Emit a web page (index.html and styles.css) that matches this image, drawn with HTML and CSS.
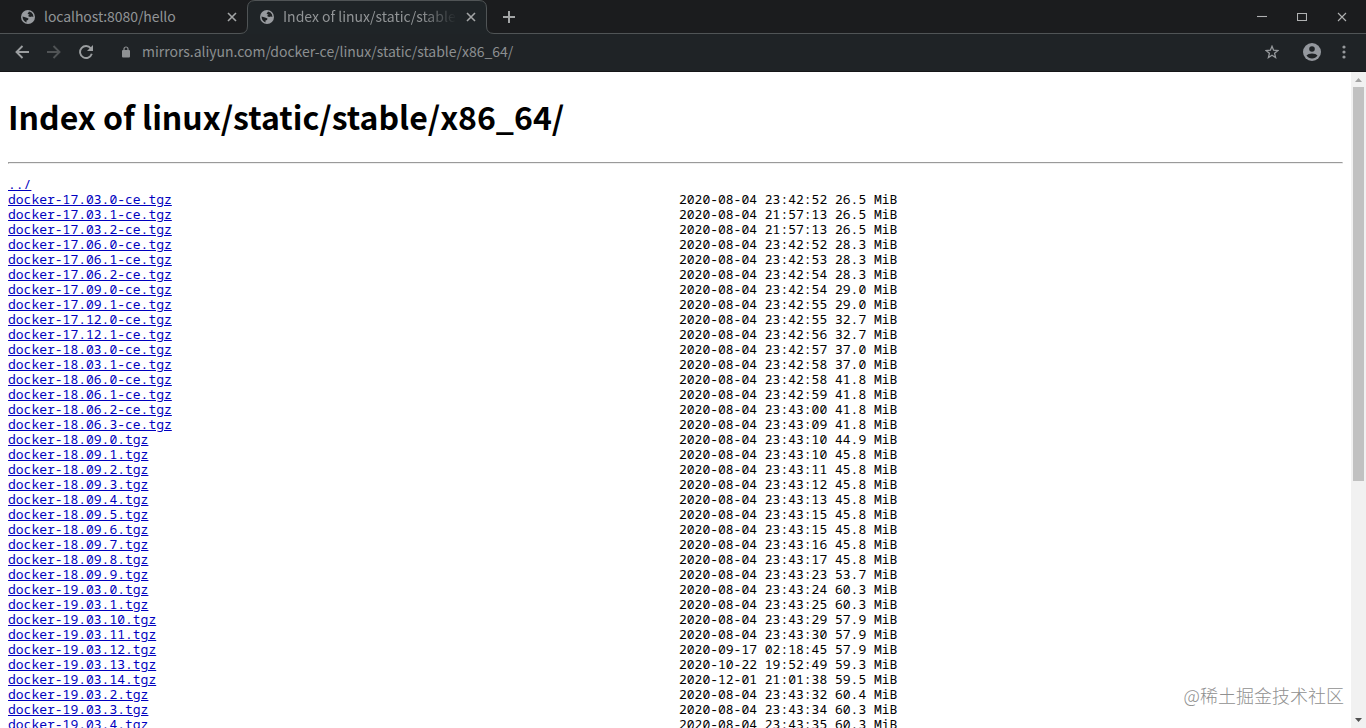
FILE: index.html
```html
<!DOCTYPE html>
<html lang="en">
<head>
    <meta charset="UTF-8">
    <meta name="viewport" content="width=device-width, initial-scale=1.0">
    <title>Index of linux/static/stable/x86_64/</title>
    <link rel="stylesheet" href="styles.css">
</head>
<body>
    <div class="tabs">
        <svg class="tab-outline" width="1366" height="34" viewBox="0 0 1366 34">
            <path class="tab-fill" d="M240 34 Q247.500 33 247.500 26 V8 Q247.500 .5 255 .5 H479 Q486.500 .5 486.500 8 V26 Q486.500 33.500 494 33.500 V34 Z"/>
            <path class="tab-line" d="M0 33.500 H240 Q247.500 33.500 247.500 26 V8 Q247.500 .5 255 .5 H479 Q486.500 .5 486.500 8 V26 Q486.500 33.500 494 33.500 H1366"/>
        </svg>
        <div class="tab">
            <svg class="globe" width="14" height="14" viewBox="0 0 14 14"><circle cx="7" cy="7" r="7"/><path d="M1.500 6.500 L5 7.500 L7.500 8.500 L7 10 L5.500 10.500 L5.500 12.400 Q1.800 11 1.500 6.500Z M8 1.500 Q11 2 12 4.500 L12.400 7 L11 6.500 L9 7 L7 6 L8.500 4.500 L6.500 4 Z"/></svg>
            <span class="tab-title narrow">localhost:8080/hello</span>
            <svg class="close" width="10" height="10" viewBox="0 0 10 10"><path d="M1 1 L9 9 M9 1 L1 9"/></svg>
        </div>
        <div class="tab">
            <svg class="globe" width="14" height="14" viewBox="0 0 14 14"><circle cx="7" cy="7" r="7"/><path d="M1.500 6.500 L5 7.500 L7.500 8.500 L7 10 L5.500 10.500 L5.500 12.400 Q1.800 11 1.500 6.500Z M8 1.500 Q11 2 12 4.500 L12.400 7 L11 6.500 L9 7 L7 6 L8.500 4.500 L6.500 4 Z"/></svg>
            <span class="tab-title faded">Index of linux/static/stable</span>
            <svg class="close" width="10" height="10" viewBox="0 0 10 10"><path d="M1 1 L9 9 M9 1 L1 9"/></svg>
        </div>
        <svg class="new-tab" width="12" height="12" viewBox="0 0 12 12"><path d="M6 0 V12 M0 6 H12"/></svg>
        <div class="window-buttons">
            <svg width="10" height="12" viewBox="0 0 10 12"><path d="M0 5.500 H10"/></svg>
            <svg width="10" height="10" viewBox="0 0 10 10"><path d="M.5 1.500 H9.500 V8.500 H.5 Z"/></svg>
            <svg width="10" height="10" viewBox="0 0 10 10"><path d="M1 1 L9 9 M9 1 L1 9"/></svg>
        </div>
    </div>

    <div class="toolbar">
        <svg class="nav" width="14" height="14" viewBox="0 0 14 14"><path d="M14 7 H1.500 M7.500 1 L1.500 7 L7.500 13"/></svg>
        <svg class="nav disabled" width="14" height="14" viewBox="0 0 14 14"><path d="M0 7 H12.500 M6.500 1 L12.500 7 L6.500 13"/></svg>
        <svg class="nav" width="14" height="14" viewBox="0 0 14 14"><path d="M11.800 3.300 A6 6 0 1 0 12.800 8.800"/><path class="solid" d="M14 0 V6 H8 Z"/></svg>
        <svg class="lock" width="8" height="12" viewBox="0 0 8 12"><rect x="0" y="4" width="8" height="7.500" rx="1"/><path d="M2 4.500 V3 A2 2 0 0 1 6 3 V4.500"/></svg>
        <span class="address">mirrors.aliyun.com/docker-ce/linux/static/stable/x86_64/</span>
        <svg class="star" width="14" height="14" viewBox="0 0 14 14"><path d="M7 1.300 L8.600 5.200 L12.900 5.600 L9.600 8.300 L10.600 12.500 L7 10.200 L3.400 12.500 L4.400 8.300 L1.100 5.600 L5.400 5.200 Z"/></svg>
        <svg class="avatar" width="18" height="18" viewBox="0 0 18 18"><circle cx="9" cy="9" r="9"/><circle class="hole" cx="9" cy="6" r="2.800"/><path class="hole" d="M3.500 12.500 Q5 10.500 9 10.500 Q13 10.500 14.500 12.500 Q12.500 15.500 9 15.500 Q5.500 15.500 3.500 12.500Z"/></svg>
        <svg class="more" width="4" height="14" viewBox="0 0 4 14"><circle cx="2" cy="2" r="1.600"/><circle cx="2" cy="7" r="1.600"/><circle cx="2" cy="12" r="1.600"/></svg>
    </div>

    <div class="viewport">
        <div class="page">
            <h1>Index of linux/static/stable/x86_64/</h1>
            <hr>
            <ul class="listing">
                <li><a href="#">../</a></li>
                <li><a href="#">docker-17.03.0-ce.tgz</a><span>2020-08-04 23:42:52 26.5 MiB</span></li>
                <li><a href="#">docker-17.03.1-ce.tgz</a><span>2020-08-04 21:57:13 26.5 MiB</span></li>
                <li><a href="#">docker-17.03.2-ce.tgz</a><span>2020-08-04 21:57:13 26.5 MiB</span></li>
                <li><a href="#">docker-17.06.0-ce.tgz</a><span>2020-08-04 23:42:52 28.3 MiB</span></li>
                <li><a href="#">docker-17.06.1-ce.tgz</a><span>2020-08-04 23:42:53 28.3 MiB</span></li>
                <li><a href="#">docker-17.06.2-ce.tgz</a><span>2020-08-04 23:42:54 28.3 MiB</span></li>
                <li><a href="#">docker-17.09.0-ce.tgz</a><span>2020-08-04 23:42:54 29.0 MiB</span></li>
                <li><a href="#">docker-17.09.1-ce.tgz</a><span>2020-08-04 23:42:55 29.0 MiB</span></li>
                <li><a href="#">docker-17.12.0-ce.tgz</a><span>2020-08-04 23:42:55 32.7 MiB</span></li>
                <li><a href="#">docker-17.12.1-ce.tgz</a><span>2020-08-04 23:42:56 32.7 MiB</span></li>
                <li><a href="#">docker-18.03.0-ce.tgz</a><span>2020-08-04 23:42:57 37.0 MiB</span></li>
                <li><a href="#">docker-18.03.1-ce.tgz</a><span>2020-08-04 23:42:58 37.0 MiB</span></li>
                <li><a href="#">docker-18.06.0-ce.tgz</a><span>2020-08-04 23:42:58 41.8 MiB</span></li>
                <li><a href="#">docker-18.06.1-ce.tgz</a><span>2020-08-04 23:42:59 41.8 MiB</span></li>
                <li><a href="#">docker-18.06.2-ce.tgz</a><span>2020-08-04 23:43:00 41.8 MiB</span></li>
                <li><a href="#">docker-18.06.3-ce.tgz</a><span>2020-08-04 23:43:09 41.8 MiB</span></li>
                <li><a href="#">docker-18.09.0.tgz</a><span>2020-08-04 23:43:10 44.9 MiB</span></li>
                <li><a href="#">docker-18.09.1.tgz</a><span>2020-08-04 23:43:10 45.8 MiB</span></li>
                <li><a href="#">docker-18.09.2.tgz</a><span>2020-08-04 23:43:11 45.8 MiB</span></li>
                <li><a href="#">docker-18.09.3.tgz</a><span>2020-08-04 23:43:12 45.8 MiB</span></li>
                <li><a href="#">docker-18.09.4.tgz</a><span>2020-08-04 23:43:13 45.8 MiB</span></li>
                <li><a href="#">docker-18.09.5.tgz</a><span>2020-08-04 23:43:15 45.8 MiB</span></li>
                <li><a href="#">docker-18.09.6.tgz</a><span>2020-08-04 23:43:15 45.8 MiB</span></li>
                <li><a href="#">docker-18.09.7.tgz</a><span>2020-08-04 23:43:16 45.8 MiB</span></li>
                <li><a href="#">docker-18.09.8.tgz</a><span>2020-08-04 23:43:17 45.8 MiB</span></li>
                <li><a href="#">docker-18.09.9.tgz</a><span>2020-08-04 23:43:23 53.7 MiB</span></li>
                <li><a href="#">docker-19.03.0.tgz</a><span>2020-08-04 23:43:24 60.3 MiB</span></li>
                <li><a href="#">docker-19.03.1.tgz</a><span>2020-08-04 23:43:25 60.3 MiB</span></li>
                <li><a href="#">docker-19.03.10.tgz</a><span>2020-08-04 23:43:29 57.9 MiB</span></li>
                <li><a href="#">docker-19.03.11.tgz</a><span>2020-08-04 23:43:30 57.9 MiB</span></li>
                <li><a href="#">docker-19.03.12.tgz</a><span>2020-09-17 02:18:45 57.9 MiB</span></li>
                <li><a href="#">docker-19.03.13.tgz</a><span>2020-10-22 19:52:49 59.3 MiB</span></li>
                <li><a href="#">docker-19.03.14.tgz</a><span>2020-12-01 21:01:38 59.5 MiB</span></li>
                <li><a href="#">docker-19.03.2.tgz</a><span>2020-08-04 23:43:32 60.4 MiB</span></li>
                <li><a href="#">docker-19.03.3.tgz</a><span>2020-08-04 23:43:34 60.3 MiB</span></li>
                <li><a href="#">docker-19.03.4.tgz</a><span>2020-08-04 23:43:35 60.3 MiB</span></li>
            </ul>
        </div>
        <div class="scrollbar">
            <svg width="15" height="15" viewBox="0 0 15 15"><path class="arrow-up" d="M4 10 L7.500 6 L11 10 Z"/></svg>
            <div class="thumb"></div>
            <svg class="down" width="15" height="15" viewBox="0 0 15 15"><path class="arrow-down" d="M4 5 L7.500 9 L11 5 Z"/></svg>
        </div>
        <div class="watermark">@稀土掘金技术社区</div>
    </div>
</body>
</html>
```
FILE: styles.css
```css
body {
    margin: 0;
    height: 728px;
    display: flex;
    flex-direction: column;
    overflow: hidden;
    background: #fff;
    font-family: "Noto Sans CJK SC", sans-serif;
}
svg {
    display: block;
    flex: none;
    fill: none;
}

/* tab strip */
.tabs {
    position: relative;
    display: flex;
    align-items: center;
    height: 34px;
    flex: none;
    background: #1b1c1e;
    color: #919496;
    font-size: 14px;
}
.tab-outline {
    position: absolute;
    left: 0;
    top: 0;
}
.tab-fill {
    fill: #1f2427;
}
.tab-line {
    stroke: #505456;
}
.tab {
    position: relative;
    box-sizing: border-box;
    display: flex;
    align-items: center;
    width: 239px;
    height: 34px;
    padding: 0 2px 0 13px;
}
.tab:nth-of-type(1) {
    margin-left: 8px;
}
.globe circle {
    fill: #989b9f;
}
.globe path {
    fill: #1d2022;
}
.tab-title {
    width: 174px;
    height: 34px;
    margin: 0 9px;
    line-height: 32px;
    white-space: nowrap;
    overflow: hidden;
}
.narrow {
    letter-spacing: -0.08px;
}
.faded {
    -webkit-mask-image: linear-gradient(to right, #000 138px, transparent 174px);
    mask-image: linear-gradient(to right, #000 138px, transparent 174px);
}
.close path {
    stroke: #a3a5a6;
    stroke-width: 1.6;
}
.new-tab {
    position: relative;
    margin-left: 17px;
}
.new-tab path {
    stroke: #a3a5a6;
    stroke-width: 2;
}
.window-buttons {
    position: relative;
    display: flex;
    align-items: center;
    gap: 30px;
    margin-left: auto;
    margin-right: 19px;
}
.window-buttons path {
    stroke: #b0b1b2;
    stroke-width: 1.1;
}

/* toolbar */
.toolbar {
    box-sizing: border-box;
    display: flex;
    align-items: center;
    height: 38px;
    flex: none;
    padding: 0 20px 2px 15px;
    background: #1f2326;
    border-bottom: 1px solid #151618;
    color: #8c8f91;
    font-size: 14px;
}
.nav {
    margin-right: 18px;
}
.nav path {
    stroke: #9b9ea0;
    stroke-width: 1.9;
}
.disabled path {
    stroke: #505355;
}
.nav .solid {
    fill: #9b9ea0;
    stroke: none;
}
.lock {
    margin-left: 11px;
}
.lock rect {
    fill: #8f9294;
}
.lock path {
    stroke: #8f9294;
    stroke-width: 1.2;
}
.address {
    flex: 1;
    height: 34px;
    margin-left: 12px;
    line-height: 32px;
    letter-spacing: -0.025px;
}
.star path {
    stroke: #96999c;
    stroke-width: 1.3;
}
.avatar {
    margin: 0 21px 0 24px;
}
.avatar circle {
    fill: #94989e;
}
.avatar .hole {
    fill: #1f2326;
}
.more circle {
    fill: #96999c;
}

/* page */
.viewport {
    position: relative;
    display: flex;
    height: 656px;
}
.page {
    flex: 1;
    padding: 0 8px;
    overflow: hidden;
}
h1 {
    margin: 20px 0 22px;
    font-size: 32px;
    line-height: 48px;
    font-weight: bold;
    color: #000;
}
hr {
    margin: 0 0 13px;
}
.listing {
    margin: 0;
    padding: 0;
    list-style: none;
    font-family: "Noto Mono", "Droid Sans Mono", "Noto Sans Mono", "DejaVu Sans Mono", monospace;
    font-size: 13px;
    font-feature-settings: "zero";
    line-height: 15px;
    color: #000;
}
.listing li {
    display: grid;
    grid-template-columns: 671px auto;
    justify-content: start;
    justify-items: start;
    height: 15px;
}
.listing a {
    color: #0000c0;
    text-decoration: underline;
}

.scrollbar {
    display: flex;
    flex-direction: column;
    width: 15px;
    background: #f1f1f1;
}
.thumb {
    height: 394px;
    margin: 0 2px;
    background: #c1c1c1;
}
.down {
    margin-top: auto;
}
.arrow-up {
    fill: #a3a3a3;
}
.arrow-down {
    fill: #505050;
}
.watermark {
    position: absolute;
    right: 22px;
    bottom: 19px;
    font-size: 18px;
    font-weight: 300;
    line-height: 27px;
    color: #909090;
}
```
